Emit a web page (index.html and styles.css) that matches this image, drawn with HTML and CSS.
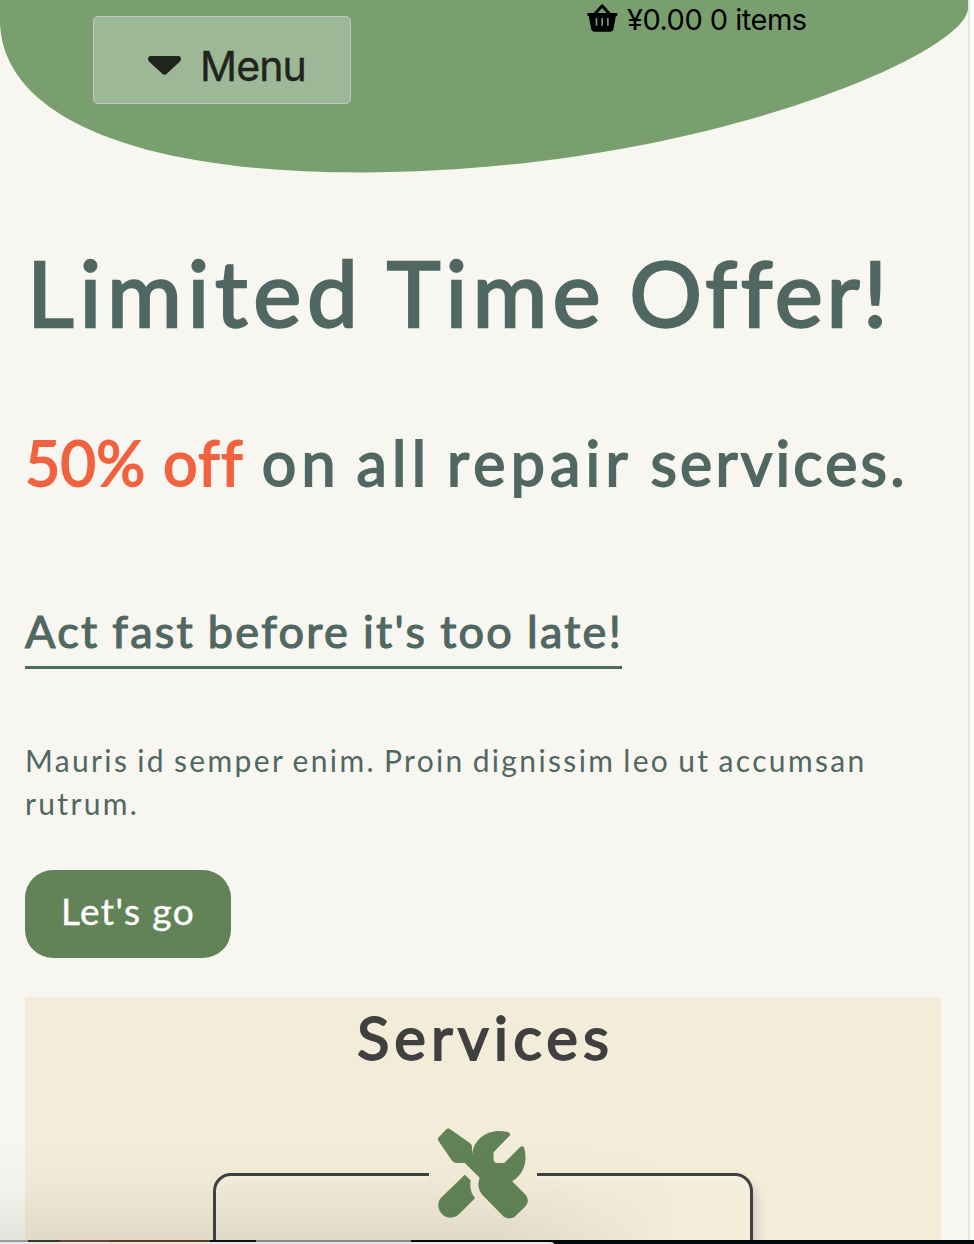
FILE: index.html
```html
<!DOCTYPE html>
<html lang="en">
<head>
<meta charset="utf-8">
<title>Limited Time Offer</title>
<link rel="stylesheet" href="styles.css">
</head>
<body>
<div class="page">
  <header class="header">
    <svg class="header-shape" viewBox="0 0 968 174" aria-hidden="true"><path d="M0 0H968V8C968 55 690 172.5 360 172.5C125 172.5 0 112 0 20Z"/></svg>
    <button class="menu">
      <svg class="caret" viewBox="0 0 33 20"><path d="M3 0H30Q33 0 33 3Q33 4.500 31.500 6L19 17.600Q16.500 20 14 17.600L1.500 6Q0 4.500 0 3Q0 0 3 0Z"/></svg>
      <span class="menu-label">Menu</span>
    </button>
    <div class="cart">
      <svg class="basket" viewBox="52 12 94 86"><path fill-rule="evenodd" d="M98 13Q100 13 102 15L124 40H141Q145 40 145 44Q145 48 140 50L133 88Q131 97 122 97H75Q66 97 64 88L57 50Q52 48 52 44Q52 40 56 40H72L94 15Q96 13 98 13ZM98 24L84 40H112ZM78 55V79H83V55ZM95.500 55V79H100.500V55ZM113 55V79H118V55Z"/></svg>
      <span class="cart-text">¥0.00 0 items</span>
    </div>
  </header>
  <main class="content">
    <h1 class="title"><span class="t-limited">Limited</span> <span class="t-time">Time</span> <span class="t-offer">Offer!</span></h1>
    <h2 class="deal"><span class="off"><span class="d-fifty">50%</span> <span class="d-off">off</span></span> <span class="d-wide">on all repair</span> <span class="d-services">services.</span></h2>
    <h3 class="hurry">Act fast before it's too late!</h3>
    <p class="text"><span class="line">Mauris id semper enim. Proin dignissim leo ut accumsan</span> <span class="line">rutrum.</span></p>
    <a class="go"><span>Let's go</span></a>
    <section class="services">
      <h2 class="services-title">Services</h2>
      <div class="card">
        <div class="tool">
          <svg class="tool-icon" viewBox="294 414 272 273"><path d="M325 414L331 417L390 458Q397 463 397 470V495C402 438 455 412 505 425Q515 428 511 436L462 486V510Q463 518 470 519H494L541 472Q552 463 555 475C566 520 550 555 518 574L558 614Q572 630 560 648L526 681Q510 692 493 681L429 616C415 602 413 580 420 563L375 519H348Q341 518 337 513L294 450V443L319 417Z"/><path d="M375 554L393 572C389 592 394 612 406 625L357 674C343 687 323 687 309 676C292 661 290 638 304 623Z"/></svg>
        </div>
      </div>
    </section>
  </main>
  <div class="shade"></div>
</div>
<div class="edge"><div class="edge-line"></div><div class="edge-base"></div></div>
</body>
</html>
```
FILE: styles.css
```css
* { box-sizing: border-box; }
body { margin: 0; background: #fafafa; overflow: hidden; }
.page { position: relative; width: 970px; height: 1244px; overflow: hidden; background: #f8f6f1; border-right: 2px solid #e8e8e8; font-family: Lato, sans-serif; color: #506762; }
.header { position: relative; display: flex; align-items: flex-start; height: 174px; padding: 16px 0 0 93px; }
.header-shape { position: absolute; top: 0; left: 0; width: 968px; height: 174px; fill: #7a9f6f; }
.menu { position: relative; display: flex; align-items: center; width: 258px; height: 88px; padding: 12px 0 0 54px; gap: 19px; border: 1px solid #c3c7c0; border-radius: 5px; background: #9db896; color: #20251e; font-family: Inter, sans-serif; }
.caret { width: 33px; height: 20px; fill: currentColor; }
.menu-label { font-size: 41px; line-height: 50px; letter-spacing: -.9px; -webkit-text-stroke: .4px currentColor; }
.cart { position: relative; display: flex; align-items: center; gap: 9px; height: 34px; margin: -13px 0 0 236px; color: #000; font-family: Inter, sans-serif; font-size: 29px; line-height: 34px; white-space: nowrap; }
.basket { width: 31px; height: 28px; margin-bottom: 4px; }
.cart-text { letter-spacing: -.5px; }
.content { display: flex; flex-direction: column; align-items: flex-start; padding: 0 27px 0 25px; }
h1, h2, h3, p { margin: 0; font-weight: 400; white-space: nowrap; }
.title { margin-top: 62px; padding-left: 2px; height: 114px; font-size: 91px; line-height: 112px; -webkit-text-stroke: 2.400px currentColor; }
.t-limited { letter-spacing: 5.700px; }
.t-time { letter-spacing: 5.200px; }
.t-offer { letter-spacing: 3.600px; }
.deal { margin-top: 75px; height: 79px; font-size: 61px; line-height: 76px; letter-spacing: 2px; -webkit-text-stroke: 1.800px currentColor; }
.off { color: #f2623f; }
.d-fifty { letter-spacing: .2px; }
.d-off { letter-spacing: 1.500px; }
.d-wide { letter-spacing: 5.200px; word-spacing: -5px; }
.d-services { letter-spacing: 3.200px; }
.hurry { margin-top: 99px; height: 66px; border-bottom: 3px solid #506b64; width: 597px; font-size: 45px; line-height: 56px; letter-spacing: 2.300px; word-spacing: -1px; -webkit-text-stroke: 1.200px currentColor; }
.text { margin-top: 70px; font-size: 30px; line-height: 43px; letter-spacing: 2.350px; word-spacing: -2px; }
.line { display: block; }
.go { display: flex; align-items: center; justify-content: center; margin-top: 45px; width: 206px; height: 88px; border-radius: 28px; background: #618357; color: #fff; font-size: 37px; line-height: 44px; letter-spacing: 1.400px; padding-bottom: 7px; -webkit-text-stroke: .4px currentColor; }
.services { width: 916px; height: 260px; margin-top: 39px; background: #f3ecd9; display: flex; flex-direction: column; align-items: center; border-radius: 2px 2px 0 0; overflow: hidden; }
.services-title { flex: none; height: 176px; padding: 2px 0 0 5px; color: #404040; font-size: 60px; line-height: 76px; letter-spacing: 5px; -webkit-text-stroke: 1.800px currentColor; }
.card { display: flex; justify-content: center; width: 540px; height: 300px; flex: none; border: 3px solid #404040; border-radius: 18px; box-shadow: 6px 8px 10px -2px #cfcac8, inset 0 8px 10px -4px #f5f2e2; }
.tool { display: flex; align-items: center; justify-content: center; width: 108px; height: 108px; margin-top: -57px; background: #f3ecd9; }
.tool-icon { width: 90px; height: 91px; fill: #618357; }
.shade { position: absolute; left: 0; top: 1140px; width: 720px; height: 100px; background: linear-gradient(transparent, rgba(60,65,40,.025) 45%, rgba(60,65,40,.1)); mask-image: linear-gradient(to right, #000 70%, transparent 94%); }
.edge { position: absolute; left: 0; top: 1240px; width: 974px; height: 4px; background: #060b10; }
.edge-line { height: 2px; background: linear-gradient(to right, #999 0 28px, #383822 28px 60px, #6c4634 60px 110px, #5b3b23 110px 210px, #111 210px 256px, #888 256px 411px, #070707 411px); }
.edge-base { width: 554px; height: 2px; background: #e7e7e7; border-top-right-radius: 4px 2px; }
```
